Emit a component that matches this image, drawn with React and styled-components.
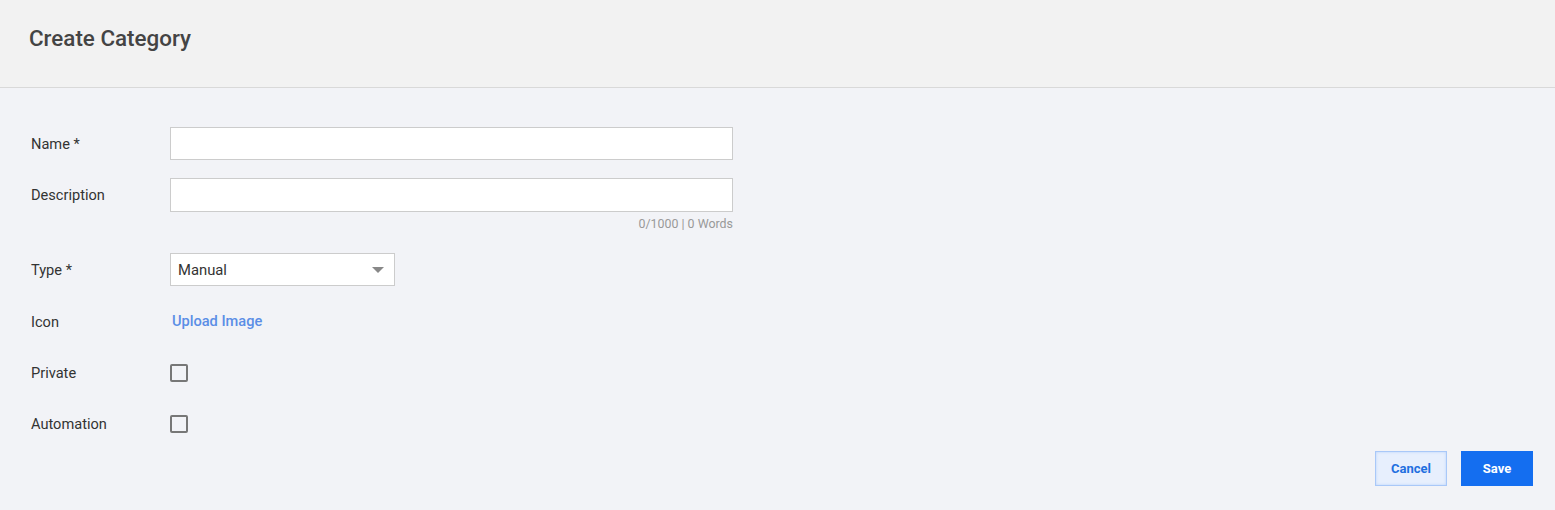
import styled, { createGlobalStyle } from "styled-components";

const GlobalStyle = createGlobalStyle`
  body {
    margin: 0;
    font-family: Roboto, "Liberation Sans", sans-serif;
    background: #f2f3f7;
  }
`;

const Page = styled.div`
  min-height: 510px;
  background: #f2f3f7;
`;

const Header = styled.header`
  box-sizing: border-box;
  height: 88px;
  padding: 24px 0 0 29px;
  background: #f2f2f2;
  border-bottom: 1px solid #d9d9d9;
`;

const Title = styled.h1`
  margin: 0;
  font-size: 22.4px;
  line-height: 28px;
  font-weight: 500;
  color: #444;
`;

const Form = styled.form`
  padding: 39px 22px 0 31px;
`;

const Row = styled.div`
  display: flex;
  align-items: flex-start;
  margin-bottom: ${(p) => p.$gap || 18}px;
`;

const Label = styled.label`
  box-sizing: border-box;
  width: 139px;
  height: 33px;
  padding-top: 1px;
  flex-shrink: 0;
  font-size: 14.6px;
  line-height: 32px;
  color: #333;
`;

const Field = styled.div`
  display: flex;
  flex-direction: column;
  width: ${(p) => p.$width}px;
`;

const Input = styled.input`
  box-sizing: border-box;
  height: ${(p) => p.$height || 33}px;
  width: 100%;
  border: 1px solid #ccc;
  background: #fff;
  padding: 0 8px;
  font: inherit;
  font-size: 14.6px;
  outline: none;
`;

const Counter = styled.div`
  margin-top: 2px;
  text-align: right;
  font-size: 12.4px;
  line-height: 19px;
  color: #999;
`;

const Select = styled.div`
  box-sizing: border-box;
  height: 33px;
  width: 225px;
  border: 1px solid #ccc;
  background: #fff;
  display: flex;
  align-items: center;
  justify-content: space-between;
  padding: 0 10px 0 7px;
  font-size: 14.8px;
  color: #333;
`;

const Caret = styled.span`
  width: 0;
  height: 0;
  border-left: 6px solid transparent;
  border-right: 6px solid transparent;
  border-top: 6px solid #888;
`;

const LinkText = styled.a`
  font-size: 14.6px;
  line-height: 33px;
  font-weight: 500;
  color: #5b8ee6;
  text-decoration: none;
  margin-left: 2px;
  cursor: pointer;
`;

const CheckboxWrap = styled.div`
  height: 33px;
  display: flex;
  align-items: center;
`;

const Checkbox = styled.span`
  box-sizing: border-box;
  width: 18px;
  height: 18px;
  border: 2px solid #777;
  border-radius: 2px;
  margin-top: 1px;
`;

const Footer = styled.div`
  display: flex;
  justify-content: flex-end;
  gap: 14px;
  margin-top: -7px;
`;

const Button = styled.button`
  box-sizing: border-box;
  width: 72px;
  height: 35px;
  font-family: Roboto, "Liberation Sans", sans-serif;
  font-size: 13px;
  font-weight: 700;
  cursor: pointer;
  border: 1px solid ${(p) => (p.$primary ? "#146ef0" : "#a9c8f8")};
  background: ${(p) => (p.$primary ? "#146ef0" : "#e7effd")};
  color: ${(p) => (p.$primary ? "#fff" : "#1f6fe0")};
  box-shadow: ${(p) => (p.$primary ? "none" : "inset 0 0 3px #b9d3fa")};
`;

export default function App() {
  return (
    <Page>
      <GlobalStyle />
      <Header>
        <Title>Create Category</Title>
      </Header>
      <Form>
        <Row>
          <Label>Name *</Label>
          <Field $width={563}>
            <Input />
          </Field>
        </Row>
        <Row $gap={20}>
          <Label>Description</Label>
          <Field $width={563}>
            <Input $height={34} />
            <Counter>0/1000 | 0 Words</Counter>
          </Field>
        </Row>
        <Row $gap={19}>
          <Label>Type *</Label>
          <Select>
            Manual
            <Caret />
          </Select>
        </Row>
        <Row>
          <Label>Icon</Label>
          <LinkText>Upload Image</LinkText>
        </Row>
        <Row>
          <Label>Private</Label>
          <CheckboxWrap>
            <Checkbox />
          </CheckboxWrap>
        </Row>
        <Row>
          <Label>Automation</Label>
          <CheckboxWrap>
            <Checkbox />
          </CheckboxWrap>
        </Row>
        <Footer>
          <Button type="button">Cancel</Button>
          <Button type="button" $primary>
            Save
          </Button>
        </Footer>
      </Form>
    </Page>
  );
}
